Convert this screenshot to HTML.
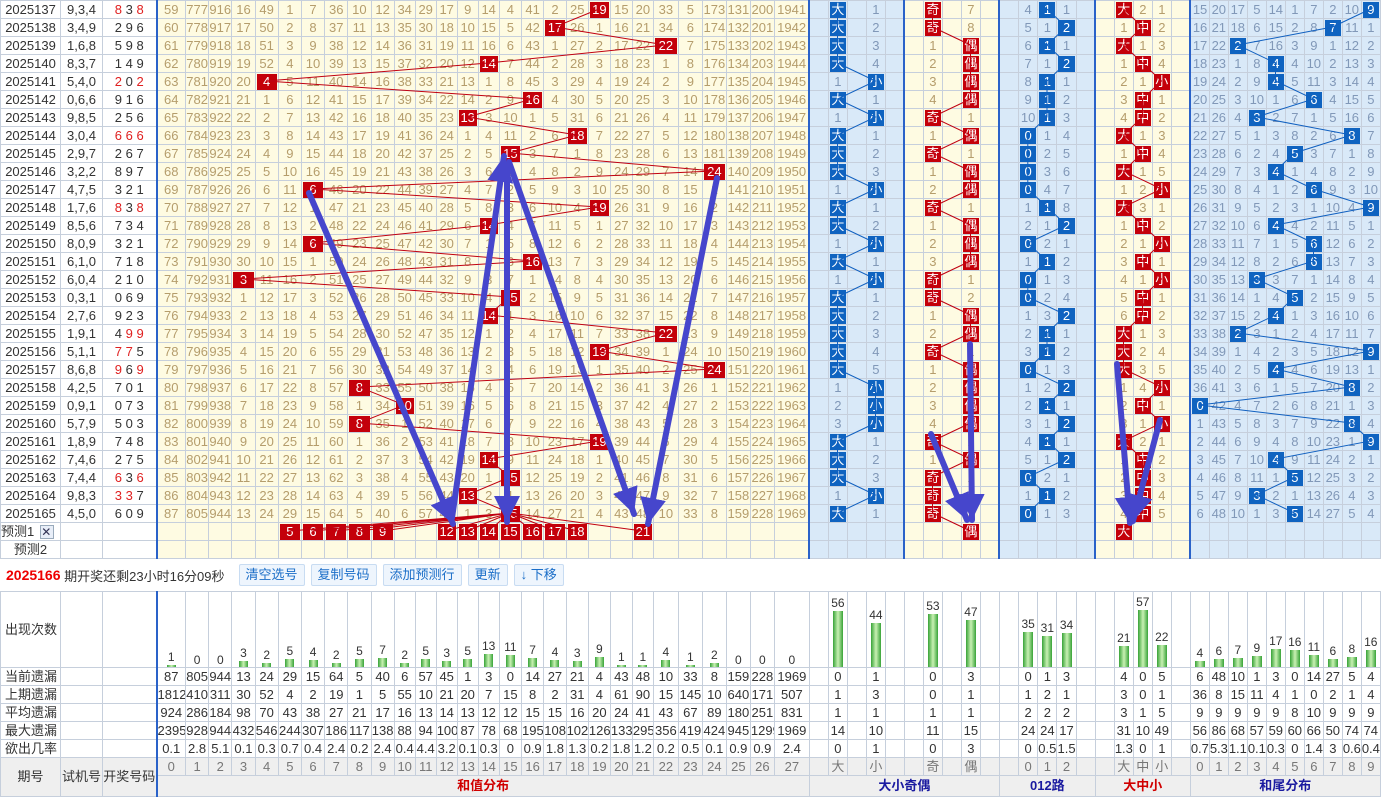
<!DOCTYPE html>
<html><head><meta charset="utf-8"><style>
*{margin:0;padding:0;box-sizing:border-box}
body{width:1382px;height:800px;background:#fff;font-family:"Liberation Sans","Noto Sans CJK SC",sans-serif;font-size:13px;color:#333;position:relative;overflow:hidden}
table{border-collapse:collapse;table-layout:fixed;width:1380px}
td{border:1px solid #c6cfdc;padding:0;text-align:center;white-space:nowrap;overflow:hidden;line-height:16px}
.m tr{height:18px}
col.y{background:#fefbe2}col.b{background:#d9e9f8}
col.s{border-left:2px solid #2a62c9}
.m td:nth-child(n+4){color:#b59d6c}
.m td:nth-child(n+32):nth-child(-n+36),.m td:nth-child(n+42):nth-child(-n+46),.m td:nth-child(n+52){color:#8198b8}
b{display:block;margin:0 1px;background:#c4000a;color:#fff!important;font-weight:normal;height:16px;line-height:16px}
b.u{background:#0f63c0}
em{color:#e02020;font-style:normal}
.x{display:inline-block;width:14px;height:14px;border:1px solid #9ab;line-height:12px;font-size:12px;color:#335;margin-left:6px;background:#e8eef8}
.bar{height:32px;display:flex;align-items:center;padding-left:6px;font-size:13px}
.bar .t{color:#e00;font-weight:bold;font-size:14px}
.btn{display:inline-block;border:1px solid #c8dcf2;background:#eef5fd;color:#1b6ec8;padding:0 6px;height:22px;line-height:20px;margin-left:6px;border-radius:2px}
.st tr{height:18px}
.st td{color:#333}
.c td{vertical-align:bottom;height:76px;font-size:12px;line-height:13px}
.c i{display:block;width:9px;margin:1px auto 0;background:linear-gradient(90deg,#38a338,#c9f1b3,#38a338)}
.hd td{background:#efefef;color:#777}
.tt td{background:#efefef;font-weight:bold;height:21px}
svg{position:absolute;left:0;top:0}
</style></head><body>
<table class="m">
<colgroup><col style="width:60px"><col style="width:42px"><col style="width:54px">
<col class="y s" style="width:29px"><col class="y" style="width:23.2px"><col class="y" style="width:23.2px"><col class="y" style="width:23.2px"><col class="y" style="width:23.2px"><col class="y" style="width:23.2px"><col class="y" style="width:23.2px"><col class="y" style="width:23.2px"><col class="y" style="width:23.2px"><col class="y" style="width:23.2px"><col class="y" style="width:21px"><col class="y" style="width:21px"><col class="y" style="width:21px"><col class="y" style="width:21px"><col class="y" style="width:21px"><col class="y" style="width:22.3px"><col class="y" style="width:22.3px"><col class="y" style="width:22.3px"><col class="y" style="width:22.3px"><col class="y" style="width:22px"><col class="y" style="width:22px"><col class="y" style="width:21px"><col class="y" style="width:25px"><col class="y" style="width:24px"><col class="y" style="width:24px"><col class="y" style="width:24px"><col class="y" style="width:24px"><col class="y" style="width:35px">
<col class="b s" style="width:19px"><col class="b" style="width:19px"><col class="b" style="width:19px"><col class="b" style="width:19px"><col class="b" style="width:19px">
<col class="y s" style="width:19px"><col class="y" style="width:19px"><col class="y" style="width:19px"><col class="y" style="width:19px"><col class="y" style="width:19px">
<col class="b s" style="width:19.2px"><col class="b" style="width:19.2px"><col class="b" style="width:19.2px"><col class="b" style="width:19.2px"><col class="b" style="width:19.2px">
<col class="y s" style="width:19px"><col class="y" style="width:19px"><col class="y" style="width:19px"><col class="y" style="width:19px"><col class="y" style="width:19px">
<col class="b s" style="width:19px"><col class="b" style="width:19px"><col class="b" style="width:19px"><col class="b" style="width:19px"><col class="b" style="width:19px"><col class="b" style="width:19px"><col class="b" style="width:19px"><col class="b" style="width:19px"><col class="b" style="width:19px"><col class="b" style="width:19px"></colgroup>
<tr><td>2025137<td>9,3,4<td><em>8</em> 3 <em>8</em><td>59<td>777<td>916<td>16<td>49<td>1<td>7<td>36<td>10<td>12<td>34<td>29<td>17<td>9<td>14<td>4<td>41<td>2<td>25<td><b>19</b><td>15<td>20<td>33<td>5<td>173<td>131<td>200<td>1941<td><td><b class=u>大</b><td><td>1<td><td><td><b>奇</b><td><td>7<td><td><td>4<td><b class=u>1</b><td>1<td><td><td><b>大</b><td>2<td>1<td><td>15<td>20<td>17<td>5<td>14<td>1<td>7<td>2<td>10<td><b class=u>9</b></tr>
<tr><td>2025138<td>3,4,9<td>2 9 6<td>60<td>778<td>917<td>17<td>50<td>2<td>8<td>37<td>11<td>13<td>35<td>30<td>18<td>10<td>15<td>5<td>42<td><b>17</b><td>26<td>1<td>16<td>21<td>34<td>6<td>174<td>132<td>201<td>1942<td><td><b class=u>大</b><td><td>2<td><td><td><b>奇</b><td><td>8<td><td><td>5<td>1<td><b class=u>2</b><td><td><td>1<td><b>中</b><td>2<td><td>16<td>21<td>18<td>6<td>15<td>2<td>8<td><b class=u>7</b><td>11<td>1</tr>
<tr><td>2025139<td>1,6,8<td>5 9 8<td>61<td>779<td>918<td>18<td>51<td>3<td>9<td>38<td>12<td>14<td>36<td>31<td>19<td>11<td>16<td>6<td>43<td>1<td>27<td>2<td>17<td>22<td><b>22</b><td>7<td>175<td>133<td>202<td>1943<td><td><b class=u>大</b><td><td>3<td><td><td>1<td><td><b>偶</b><td><td><td>6<td><b class=u>1</b><td>1<td><td><td><b>大</b><td>1<td>3<td><td>17<td>22<td><b class=u>2</b><td>7<td>16<td>3<td>9<td>1<td>12<td>2</tr>
<tr><td>2025140<td>8,3,7<td>1 4 9<td>62<td>780<td>919<td>19<td>52<td>4<td>10<td>39<td>13<td>15<td>37<td>32<td>20<td>12<td><b>14</b><td>7<td>44<td>2<td>28<td>3<td>18<td>23<td>1<td>8<td>176<td>134<td>203<td>1944<td><td><b class=u>大</b><td><td>4<td><td><td>2<td><td><b>偶</b><td><td><td>7<td>1<td><b class=u>2</b><td><td><td>1<td><b>中</b><td>4<td><td>18<td>23<td>1<td>8<td><b class=u>4</b><td>4<td>10<td>2<td>13<td>3</tr>
<tr><td>2025141<td>5,4,0<td><em>2</em> 0 <em>2</em><td>63<td>781<td>920<td>20<td><b>4</b><td>5<td>11<td>40<td>14<td>16<td>38<td>33<td>21<td>13<td>1<td>8<td>45<td>3<td>29<td>4<td>19<td>24<td>2<td>9<td>177<td>135<td>204<td>1945<td><td>1<td><td><b class=u>小</b><td><td><td>3<td><td><b>偶</b><td><td><td>8<td><b class=u>1</b><td>1<td><td><td>2<td>1<td><b>小</b><td><td>19<td>24<td>2<td>9<td><b class=u>4</b><td>5<td>11<td>3<td>14<td>4</tr>
<tr><td>2025142<td>0,6,6<td>9 1 6<td>64<td>782<td>921<td>21<td>1<td>6<td>12<td>41<td>15<td>17<td>39<td>34<td>22<td>14<td>2<td>9<td><b>16</b><td>4<td>30<td>5<td>20<td>25<td>3<td>10<td>178<td>136<td>205<td>1946<td><td><b class=u>大</b><td><td>1<td><td><td>4<td><td><b>偶</b><td><td><td>9<td><b class=u>1</b><td>2<td><td><td>3<td><b>中</b><td>1<td><td>20<td>25<td>3<td>10<td>1<td>6<td><b class=u>6</b><td>4<td>15<td>5</tr>
<tr><td>2025143<td>9,8,5<td>2 5 6<td>65<td>783<td>922<td>22<td>2<td>7<td>13<td>42<td>16<td>18<td>40<td>35<td>23<td><b>13</b><td>3<td>10<td>1<td>5<td>31<td>6<td>21<td>26<td>4<td>11<td>179<td>137<td>206<td>1947<td><td>1<td><td><b class=u>小</b><td><td><td><b>奇</b><td><td>1<td><td><td>10<td><b class=u>1</b><td>3<td><td><td>4<td><b>中</b><td>2<td><td>21<td>26<td>4<td><b class=u>3</b><td>2<td>7<td>1<td>5<td>16<td>6</tr>
<tr><td>2025144<td>3,0,4<td><em>6 6 6</em><td>66<td>784<td>923<td>23<td>3<td>8<td>14<td>43<td>17<td>19<td>41<td>36<td>24<td>1<td>4<td>11<td>2<td>6<td><b>18</b><td>7<td>22<td>27<td>5<td>12<td>180<td>138<td>207<td>1948<td><td><b class=u>大</b><td><td>1<td><td><td>1<td><td><b>偶</b><td><td><td><b class=u>0</b><td>1<td>4<td><td><td><b>大</b><td>1<td>3<td><td>22<td>27<td>5<td>1<td>3<td>8<td>2<td>6<td><b class=u>8</b><td>7</tr>
<tr><td>2025145<td>2,9,7<td>2 6 7<td>67<td>785<td>924<td>24<td>4<td>9<td>15<td>44<td>18<td>20<td>42<td>37<td>25<td>2<td>5<td><b>15</b><td>3<td>7<td>1<td>8<td>23<td>28<td>6<td>13<td>181<td>139<td>208<td>1949<td><td><b class=u>大</b><td><td>2<td><td><td><b>奇</b><td><td>1<td><td><td><b class=u>0</b><td>2<td>5<td><td><td>1<td><b>中</b><td>4<td><td>23<td>28<td>6<td>2<td>4<td><b class=u>5</b><td>3<td>7<td>1<td>8</tr>
<tr><td>2025146<td>3,2,2<td>8 9 7<td>68<td>786<td>925<td>25<td>5<td>10<td>16<td>45<td>19<td>21<td>43<td>38<td>26<td>3<td>6<td>1<td>4<td>8<td>2<td>9<td>24<td>29<td>7<td>14<td><b>24</b><td>140<td>209<td>1950<td><td><b class=u>大</b><td><td>3<td><td><td>1<td><td><b>偶</b><td><td><td><b class=u>0</b><td>3<td>6<td><td><td><b>大</b><td>1<td>5<td><td>24<td>29<td>7<td>3<td><b class=u>4</b><td>1<td>4<td>8<td>2<td>9</tr>
<tr><td>2025147<td>4,7,5<td>3 2 1<td>69<td>787<td>926<td>26<td>6<td>11<td><b>6</b><td>46<td>20<td>22<td>44<td>39<td>27<td>4<td>7<td>2<td>5<td>9<td>3<td>10<td>25<td>30<td>8<td>15<td>1<td>141<td>210<td>1951<td><td>1<td><td><b class=u>小</b><td><td><td>2<td><td><b>偶</b><td><td><td><b class=u>0</b><td>4<td>7<td><td><td>1<td>2<td><b>小</b><td><td>25<td>30<td>8<td>4<td>1<td>2<td><b class=u>6</b><td>9<td>3<td>10</tr>
<tr><td>2025148<td>1,7,6<td><em>8</em> 3 <em>8</em><td>70<td>788<td>927<td>27<td>7<td>12<td>1<td>47<td>21<td>23<td>45<td>40<td>28<td>5<td>8<td>3<td>6<td>10<td>4<td><b>19</b><td>26<td>31<td>9<td>16<td>2<td>142<td>211<td>1952<td><td><b class=u>大</b><td><td>1<td><td><td><b>奇</b><td><td>1<td><td><td>1<td><b class=u>1</b><td>8<td><td><td><b>大</b><td>3<td>1<td><td>26<td>31<td>9<td>5<td>2<td>3<td>1<td>10<td>4<td><b class=u>9</b></tr>
<tr><td>2025149<td>8,5,6<td>7 3 4<td>71<td>789<td>928<td>28<td>8<td>13<td>2<td>48<td>22<td>24<td>46<td>41<td>29<td>6<td><b>14</b><td>4<td>7<td>11<td>5<td>1<td>27<td>32<td>10<td>17<td>3<td>143<td>212<td>1953<td><td><b class=u>大</b><td><td>2<td><td><td>1<td><td><b>偶</b><td><td><td>2<td>1<td><b class=u>2</b><td><td><td>1<td><b>中</b><td>2<td><td>27<td>32<td>10<td>6<td><b class=u>4</b><td>4<td>2<td>11<td>5<td>1</tr>
<tr><td>2025150<td>8,0,9<td>3 2 1<td>72<td>790<td>929<td>29<td>9<td>14<td><b>6</b><td>49<td>23<td>25<td>47<td>42<td>30<td>7<td>1<td>5<td>8<td>12<td>6<td>2<td>28<td>33<td>11<td>18<td>4<td>144<td>213<td>1954<td><td>1<td><td><b class=u>小</b><td><td><td>2<td><td><b>偶</b><td><td><td><b class=u>0</b><td>2<td>1<td><td><td>2<td>1<td><b>小</b><td><td>28<td>33<td>11<td>7<td>1<td>5<td><b class=u>6</b><td>12<td>6<td>2</tr>
<tr><td>2025151<td>6,1,0<td>7 1 8<td>73<td>791<td>930<td>30<td>10<td>15<td>1<td>50<td>24<td>26<td>48<td>43<td>31<td>8<td>2<td>6<td><b>16</b><td>13<td>7<td>3<td>29<td>34<td>12<td>19<td>5<td>145<td>214<td>1955<td><td><b class=u>大</b><td><td>1<td><td><td>3<td><td><b>偶</b><td><td><td>1<td><b class=u>1</b><td>2<td><td><td>3<td><b>中</b><td>1<td><td>29<td>34<td>12<td>8<td>2<td>6<td><b class=u>6</b><td>13<td>7<td>3</tr>
<tr><td>2025152<td>6,0,4<td>2 1 0<td>74<td>792<td>931<td><b>3</b><td>11<td>16<td>2<td>51<td>25<td>27<td>49<td>44<td>32<td>9<td>3<td>7<td>1<td>14<td>8<td>4<td>30<td>35<td>13<td>20<td>6<td>146<td>215<td>1956<td><td>1<td><td><b class=u>小</b><td><td><td><b>奇</b><td><td>1<td><td><td><b class=u>0</b><td>1<td>3<td><td><td>4<td>1<td><b>小</b><td><td>30<td>35<td>13<td><b class=u>3</b><td>3<td>7<td>1<td>14<td>8<td>4</tr>
<tr><td>2025153<td>0,3,1<td>0 6 9<td>75<td>793<td>932<td>1<td>12<td>17<td>3<td>52<td>26<td>28<td>50<td>45<td>33<td>10<td>4<td><b>15</b><td>2<td>15<td>9<td>5<td>31<td>36<td>14<td>21<td>7<td>147<td>216<td>1957<td><td><b class=u>大</b><td><td>1<td><td><td><b>奇</b><td><td>2<td><td><td><b class=u>0</b><td>2<td>4<td><td><td>5<td><b>中</b><td>1<td><td>31<td>36<td>14<td>1<td>4<td><b class=u>5</b><td>2<td>15<td>9<td>5</tr>
<tr><td>2025154<td>2,7,6<td>9 2 3<td>76<td>794<td>933<td>2<td>13<td>18<td>4<td>53<td>27<td>29<td>51<td>46<td>34<td>11<td><b>14</b><td>1<td>3<td>16<td>10<td>6<td>32<td>37<td>15<td>22<td>8<td>148<td>217<td>1958<td><td><b class=u>大</b><td><td>2<td><td><td>1<td><td><b>偶</b><td><td><td>1<td>3<td><b class=u>2</b><td><td><td>6<td><b>中</b><td>2<td><td>32<td>37<td>15<td>2<td><b class=u>4</b><td>1<td>3<td>16<td>10<td>6</tr>
<tr><td>2025155<td>1,9,1<td>4 <em>9 9</em><td>77<td>795<td>934<td>3<td>14<td>19<td>5<td>54<td>28<td>30<td>52<td>47<td>35<td>12<td>1<td>2<td>4<td>17<td>11<td>7<td>33<td>38<td><b>22</b><td>23<td>9<td>149<td>218<td>1959<td><td><b class=u>大</b><td><td>3<td><td><td>2<td><td><b>偶</b><td><td><td>2<td><b class=u>1</b><td>1<td><td><td><b>大</b><td>1<td>3<td><td>33<td>38<td><b class=u>2</b><td>3<td>1<td>2<td>4<td>17<td>11<td>7</tr>
<tr><td>2025156<td>5,1,1<td><em>7 7</em> 5<td>78<td>796<td>935<td>4<td>15<td>20<td>6<td>55<td>29<td>31<td>53<td>48<td>36<td>13<td>2<td>3<td>5<td>18<td>12<td><b>19</b><td>34<td>39<td>1<td>24<td>10<td>150<td>219<td>1960<td><td><b class=u>大</b><td><td>4<td><td><td><b>奇</b><td><td>1<td><td><td>3<td><b class=u>1</b><td>2<td><td><td><b>大</b><td>2<td>4<td><td>34<td>39<td>1<td>4<td>2<td>3<td>5<td>18<td>12<td><b class=u>9</b></tr>
<tr><td>2025157<td>8,6,8<td><em>9</em> 6 <em>9</em><td>79<td>797<td>936<td>5<td>16<td>21<td>7<td>56<td>30<td>32<td>54<td>49<td>37<td>14<td>3<td>4<td>6<td>19<td>13<td>1<td>35<td>40<td>2<td>25<td><b>24</b><td>151<td>220<td>1961<td><td><b class=u>大</b><td><td>5<td><td><td>1<td><td><b>偶</b><td><td><td><b class=u>0</b><td>1<td>3<td><td><td><b>大</b><td>3<td>5<td><td>35<td>40<td>2<td>5<td><b class=u>4</b><td>4<td>6<td>19<td>13<td>1</tr>
<tr><td>2025158<td>4,2,5<td>7 0 1<td>80<td>798<td>937<td>6<td>17<td>22<td>8<td>57<td><b>8</b><td>33<td>55<td>50<td>38<td>15<td>4<td>5<td>7<td>20<td>14<td>2<td>36<td>41<td>3<td>26<td>1<td>152<td>221<td>1962<td><td>1<td><td><b class=u>小</b><td><td><td>2<td><td><b>偶</b><td><td><td>1<td>2<td><b class=u>2</b><td><td><td>1<td>4<td><b>小</b><td><td>36<td>41<td>3<td>6<td>1<td>5<td>7<td>20<td><b class=u>8</b><td>2</tr>
<tr><td>2025159<td>0,9,1<td>0 7 3<td>81<td>799<td>938<td>7<td>18<td>23<td>9<td>58<td>1<td>34<td><b>10</b><td>51<td>39<td>16<td>5<td>6<td>8<td>21<td>15<td>3<td>37<td>42<td>4<td>27<td>2<td>153<td>222<td>1963<td><td>2<td><td><b class=u>小</b><td><td><td>3<td><td><b>偶</b><td><td><td>2<td><b class=u>1</b><td>1<td><td><td>2<td><b>中</b><td>1<td><td><b class=u>0</b><td>42<td>4<td>7<td>2<td>6<td>8<td>21<td>1<td>3</tr>
<tr><td>2025160<td>5,7,9<td>5 0 3<td>82<td>800<td>939<td>8<td>19<td>24<td>10<td>59<td><b>8</b><td>35<td>1<td>52<td>40<td>17<td>6<td>7<td>9<td>22<td>16<td>4<td>38<td>43<td>5<td>28<td>3<td>154<td>223<td>1964<td><td>3<td><td><b class=u>小</b><td><td><td>4<td><td><b>偶</b><td><td><td>3<td>1<td><b class=u>2</b><td><td><td>3<td>1<td><b>小</b><td><td>1<td>43<td>5<td>8<td>3<td>7<td>9<td>22<td><b class=u>8</b><td>4</tr>
<tr><td>2025161<td>1,8,9<td>7 4 8<td>83<td>801<td>940<td>9<td>20<td>25<td>11<td>60<td>1<td>36<td>2<td>53<td>41<td>18<td>7<td>8<td>10<td>23<td>17<td><b>19</b><td>39<td>44<td>6<td>29<td>4<td>155<td>224<td>1965<td><td><b class=u>大</b><td><td>1<td><td><td><b>奇</b><td><td>1<td><td><td>4<td><b class=u>1</b><td>1<td><td><td><b>大</b><td>2<td>1<td><td>2<td>44<td>6<td>9<td>4<td>8<td>10<td>23<td>1<td><b class=u>9</b></tr>
<tr><td>2025162<td>7,4,6<td>2 7 5<td>84<td>802<td>941<td>10<td>21<td>26<td>12<td>61<td>2<td>37<td>3<td>54<td>42<td>19<td><b>14</b><td>9<td>11<td>24<td>18<td>1<td>40<td>45<td>7<td>30<td>5<td>156<td>225<td>1966<td><td><b class=u>大</b><td><td>2<td><td><td>1<td><td><b>偶</b><td><td><td>5<td>1<td><b class=u>2</b><td><td><td>1<td><b>中</b><td>2<td><td>3<td>45<td>7<td>10<td><b class=u>4</b><td>9<td>11<td>24<td>2<td>1</tr>
<tr><td>2025163<td>7,4,4<td><em>6</em> 3 <em>6</em><td>85<td>803<td>942<td>11<td>22<td>27<td>13<td>62<td>3<td>38<td>4<td>55<td>43<td>20<td>1<td><b>15</b><td>12<td>25<td>19<td>2<td>41<td>46<td>8<td>31<td>6<td>157<td>226<td>1967<td><td><b class=u>大</b><td><td>3<td><td><td><b>奇</b><td><td>1<td><td><td><b class=u>0</b><td>2<td>1<td><td><td>2<td><b>中</b><td>3<td><td>4<td>46<td>8<td>11<td>1<td><b class=u>5</b><td>12<td>25<td>3<td>2</tr>
<tr><td>2025164<td>9,8,3<td><em>3 3</em> 7<td>86<td>804<td>943<td>12<td>23<td>28<td>14<td>63<td>4<td>39<td>5<td>56<td>44<td><b>13</b><td>2<td>1<td>13<td>26<td>20<td>3<td>42<td>47<td>9<td>32<td>7<td>158<td>227<td>1968<td><td>1<td><td><b class=u>小</b><td><td><td><b>奇</b><td><td>2<td><td><td>1<td><b class=u>1</b><td>2<td><td><td>3<td><b>中</b><td>4<td><td>5<td>47<td>9<td><b class=u>3</b><td>2<td>1<td>13<td>26<td>4<td>3</tr>
<tr><td>2025165<td>4,5,0<td>6 0 9<td>87<td>805<td>944<td>13<td>24<td>29<td>15<td>64<td>5<td>40<td>6<td>57<td>45<td>1<td>3<td><b>15</b><td>14<td>27<td>21<td>4<td>43<td>48<td>10<td>33<td>8<td>159<td>228<td>1969<td><td><b class=u>大</b><td><td>1<td><td><td><b>奇</b><td><td>3<td><td><td><b class=u>0</b><td>1<td>3<td><td><td>4<td><b>中</b><td>5<td><td>6<td>48<td>10<td>1<td>3<td><b class=u>5</b><td>14<td>27<td>5<td>4</tr>
<tr><td style="text-align:left;color:#333">预测1<span class="x">✕</span><td><td><td><td><td><td><td><td><b>5</b><td><b>6</b><td><b>7</b><td><b>8</b><td><b>9</b><td><td><td><b>12</b><td><b>13</b><td><b>14</b><td><b>15</b><td><b>16</b><td><b>17</b><td><b>18</b><td><td><td><b>21</b><td><td><td><td><td><td>
<td><td><td><td><td>
<td><td><td><td><b>偶</b><td>
<td><td><td><td><td>
<td><td><b>大</b><td><td><td>
<td><td><td><td><td><td><td><td><td><td></tr>
<tr><td style="color:#333">预测2<td><td><td><td><td><td><td><td><td><td><td><td><td><td><td><td><td><td><td><td><td><td><td><td><td><td><td><td><td><td><td><td><td><td><td><td><td><td><td><td><td><td><td><td><td><td><td><td><td><td><td><td><td><td><td><td><td><td><td><td></tr>
</table>
<div class="bar"><span class="t">2025166</span>&nbsp;期开奖还剩23小时16分09秒<span class="btn" style="margin-left:14px">清空选号</span><span class="btn">复制号码</span><span class="btn">添加预测行</span><span class="btn">更新</span><span class="btn">↓ 下移</span></div>
<table class="st">
<colgroup><col style="width:60px"><col style="width:42px"><col style="width:54px">
<col class="s" style="width:29px"><col style="width:23.2px"><col style="width:23.2px"><col style="width:23.2px"><col style="width:23.2px"><col style="width:23.2px"><col style="width:23.2px"><col style="width:23.2px"><col style="width:23.2px"><col style="width:23.2px"><col style="width:21px"><col style="width:21px"><col style="width:21px"><col style="width:21px"><col style="width:21px"><col style="width:22.3px"><col style="width:22.3px"><col style="width:22.3px"><col style="width:22.3px"><col style="width:22px"><col style="width:22px"><col style="width:21px"><col style="width:25px"><col style="width:24px"><col style="width:24px"><col style="width:24px"><col style="width:24px"><col style="width:35px">
<col style="width:19px"><col style="width:19px"><col style="width:19px"><col style="width:19px"><col style="width:19px"><col style="width:19px"><col style="width:19px"><col style="width:19px"><col style="width:19px"><col style="width:19px"><col style="width:19.2px"><col style="width:19.2px"><col style="width:19.2px"><col style="width:19.2px"><col style="width:19.2px"><col style="width:19px"><col style="width:19px"><col style="width:19px"><col style="width:19px"><col style="width:19px"><col style="width:19px"><col style="width:19px"><col style="width:19px"><col style="width:19px"><col style="width:19px"><col style="width:19px"><col style="width:19px"><col style="width:19px"><col style="width:19px"><col style="width:19px"></colgroup>
<tr class="c"><td style="vertical-align:middle;font-size:13px;text-align:left;padding-left:4px">出现次数<td><td><td>1<i style="height:2px"></i><td>0<td>0<td>3<i style="height:6px"></i><td>2<i style="height:4px"></i><td>5<i style="height:8px"></i><td>4<i style="height:7px"></i><td>2<i style="height:4px"></i><td>5<i style="height:8px"></i><td>7<i style="height:9px"></i><td>2<i style="height:4px"></i><td>5<i style="height:8px"></i><td>3<i style="height:6px"></i><td>5<i style="height:8px"></i><td>13<i style="height:13px"></i><td>11<i style="height:12px"></i><td>7<i style="height:9px"></i><td>4<i style="height:7px"></i><td>3<i style="height:6px"></i><td>9<i style="height:10px"></i><td>1<i style="height:2px"></i><td>1<i style="height:2px"></i><td>4<i style="height:7px"></i><td>1<i style="height:2px"></i><td>2<i style="height:4px"></i><td>0<td>0<td>0<td><td>56<i style="height:56px;width:10px"></i><td><td>44<i style="height:44px;width:10px"></i><td><td><td>53<i style="height:53px;width:10px"></i><td><td>47<i style="height:47px;width:10px"></i><td><td><td>35<i style="height:35px;width:10px"></i><td>31<i style="height:31px;width:10px"></i><td>34<i style="height:34px;width:10px"></i><td><td><td>21<i style="height:21px;width:10px"></i><td>57<i style="height:57px;width:10px"></i><td>22<i style="height:22px;width:10px"></i><td><td>4<i style="height:6px;width:10px"></i><td>6<i style="height:8px;width:10px"></i><td>7<i style="height:9px;width:10px"></i><td>9<i style="height:11px;width:10px"></i><td>17<i style="height:18px;width:10px"></i><td>16<i style="height:17px;width:10px"></i><td>11<i style="height:12px;width:10px"></i><td>6<i style="height:8px;width:10px"></i><td>8<i style="height:10px;width:10px"></i><td>16<i style="height:17px;width:10px"></i></tr>
<tr><td style="text-align:left;padding-left:4px">当前遗漏<td><td><td>87<td>805<td>944<td>13<td>24<td>29<td>15<td>64<td>5<td>40<td>6<td>57<td>45<td>1<td>3<td>0<td>14<td>27<td>21<td>4<td>43<td>48<td>10<td>33<td>8<td>159<td>228<td>1969<td><td>0<td><td>1<td><td><td>0<td><td>3<td><td><td>0<td>1<td>3<td><td><td>4<td>0<td>5<td><td>6<td>48<td>10<td>1<td>3<td>0<td>14<td>27<td>5<td>4</tr>
<tr><td style="text-align:left;padding-left:4px">上期遗漏<td><td><td>1812<td>410<td>311<td>30<td>52<td>4<td>2<td>19<td>1<td>5<td>55<td>10<td>21<td>20<td>7<td>15<td>8<td>2<td>31<td>4<td>61<td>90<td>15<td>145<td>10<td>640<td>171<td>507<td><td>1<td><td>3<td><td><td>0<td><td>1<td><td><td>1<td>2<td>1<td><td><td>3<td>0<td>1<td><td>36<td>8<td>15<td>11<td>4<td>1<td>0<td>2<td>1<td>4</tr>
<tr><td style="text-align:left;padding-left:4px">平均遗漏<td><td><td>924<td>286<td>184<td>98<td>70<td>43<td>38<td>27<td>21<td>17<td>16<td>13<td>14<td>13<td>12<td>12<td>15<td>15<td>16<td>20<td>24<td>41<td>43<td>67<td>89<td>180<td>251<td>831<td><td>1<td><td>1<td><td><td>1<td><td>1<td><td><td>2<td>2<td>2<td><td><td>3<td>1<td>5<td><td>9<td>9<td>9<td>9<td>9<td>8<td>10<td>9<td>9<td>9</tr>
<tr><td style="text-align:left;padding-left:4px">最大遗漏<td><td><td>2395<td>928<td>944<td>432<td>546<td>244<td>307<td>186<td>117<td>138<td>88<td>94<td>100<td>87<td>78<td>68<td>195<td>108<td>102<td>126<td>133<td>295<td>356<td>419<td>424<td>945<td>1299<td>1969<td><td>14<td><td>10<td><td><td>11<td><td>15<td><td><td>24<td>24<td>17<td><td><td>31<td>10<td>49<td><td>56<td>86<td>68<td>57<td>59<td>60<td>66<td>50<td>74<td>74</tr>
<tr><td style="text-align:left;padding-left:4px">欲出几率<td><td><td>0.1<td>2.8<td>5.1<td>0.1<td>0.3<td>0.7<td>0.4<td>2.4<td>0.2<td>2.4<td>0.4<td>4.4<td>3.2<td>0.1<td>0.3<td>0<td>0.9<td>1.8<td>1.3<td>0.2<td>1.8<td>1.2<td>0.2<td>0.5<td>0.1<td>0.9<td>0.9<td>2.4<td><td>0<td><td>1<td><td><td>0<td><td>3<td><td><td>0<td>0.5<td>1.5<td><td><td>1.3<td>0<td>1<td><td>0.7<td>5.3<td>1.1<td>0.1<td>0.3<td>0<td>1.4<td>3<td>0.6<td>0.4</tr>
<tr class="hd"><td rowspan="2" style="color:#333">期号<td rowspan="2" style="color:#333">试机号<td rowspan="2" style="color:#333">开奖号码<td>0<td>1<td>2<td>3<td>4<td>5<td>6<td>7<td>8<td>9<td>10<td>11<td>12<td>13<td>14<td>15<td>16<td>17<td>18<td>19<td>20<td>21<td>22<td>23<td>24<td>25<td>26<td>27<td><td>大<td><td>小<td><td><td>奇<td><td>偶<td><td><td>0<td>1<td>2<td><td><td>大<td>中<td>小<td><td>0<td>1<td>2<td>3<td>4<td>5<td>6<td>7<td>8<td>9</tr>
<tr class="tt"><td colspan="28" style="color:#d00000">和值分布<td colspan="10" style="color:#1a1aa0">大小奇偶<td colspan="5" style="color:#1a1aa0">012路<td colspan="5" style="color:#d00000">大中小<td colspan="10" style="color:#1a1aa0">和尾分布</tr>
</table>
<svg width="1382" height="560" viewBox="0 0 1382 560">
<defs><marker id="ah" markerUnits="userSpaceOnUse" markerWidth="26" markerHeight="32" refX="26" refY="13" orient="auto"><path d="M0,0 L26,13 L0,26 Z" fill="#4646cc"/></marker></defs>
<g fill="none" stroke="#c00010" stroke-width="1">
<polyline points="599,9 554.6,27 665.5,45 488.3,63 266.2,81 532.3,99 467.3,117 576.9,135 510,153 714,171 312.6,189 599,207 488.3,225 312.6,243 532.3,261 243,279 510,297 488.3,315 665.5,333 599,351 714,369 359,387 404.3,405 359,423 599,441 488.3,459 510,477 467.3,495 510,513"/>
<path d="M510,513L289.4,531M510,513L312.6,531M510,513L335.8,531M510,513L359,531M510,513L382.2,531M510,513L446.3,531M510,513L467.3,531M510,513L488.3,531M510,513L532.3,531M510,513L554.6,531M510,513L576.9,531M510,513L642.5,531"/>
<polyline points="932.5,9 932.5,27 970.5,45 970.5,63 970.5,81 970.5,99 932.5,117 970.5,135 932.5,153 970.5,171 970.5,189 932.5,207 970.5,225 970.5,243 970.5,261 932.5,279 932.5,297 970.5,315 970.5,333 932.5,351 970.5,369 970.5,387 970.5,405 970.5,423 932.5,441 970.5,459 932.5,477 932.5,495 932.5,513 970.5,531"/>
<polyline points="1123.5,9 1142.5,27 1123.5,45 1142.5,63 1161.5,81 1142.5,99 1142.5,117 1123.5,135 1142.5,153 1123.5,171 1161.5,189 1123.5,207 1142.5,225 1161.5,243 1142.5,261 1161.5,279 1142.5,297 1142.5,315 1123.5,333 1123.5,351 1123.5,369 1161.5,387 1142.5,405 1161.5,423 1123.5,441 1142.5,459 1142.5,477 1142.5,495 1142.5,513 1123.5,531"/>
</g>
<g fill="none" stroke="#1060c0" stroke-width="1">
<polyline points="837.5,9 837.5,27 837.5,45 837.5,63 875.5,81 837.5,99 875.5,117 837.5,135 837.5,153 837.5,171 875.5,189 837.5,207 837.5,225 875.5,243 837.5,261 875.5,279 837.5,297 837.5,315 837.5,333 837.5,351 837.5,369 875.5,387 875.5,405 875.5,423 837.5,441 837.5,459 837.5,477 875.5,495 837.5,513"/>
<polyline points="1047,9 1066.2,27 1047,45 1066.2,63 1047,81 1047,99 1047,117 1027.8,135 1027.8,153 1027.8,171 1027.8,189 1047,207 1066.2,225 1027.8,243 1047,261 1027.8,279 1027.8,297 1066.2,315 1047,333 1047,351 1027.8,369 1066.2,387 1047,405 1066.2,423 1047,441 1066.2,459 1027.8,477 1047,495 1027.8,513"/>
<polyline points="1370.5,9 1332.5,27 1237.5,45 1275.5,63 1275.5,81 1313.5,99 1256.5,117 1351.5,135 1294.5,153 1275.5,171 1313.5,189 1370.5,207 1275.5,225 1313.5,243 1313.5,261 1256.5,279 1294.5,297 1275.5,315 1237.5,333 1370.5,351 1275.5,369 1351.5,387 1199.5,405 1351.5,423 1370.5,441 1275.5,459 1294.5,477 1256.5,495 1294.5,513"/>
</g>
<g stroke="#4646cc" stroke-width="6" stroke-linecap="round" marker-end="url(#ah)">
<line x1="309" y1="193" x2="453" y2="524"/>
<line x1="452" y1="518" x2="504" y2="156"/>
<line x1="507" y1="165" x2="507" y2="522"/>
<line x1="509" y1="162" x2="634" y2="514"/>
<line x1="717" y1="178" x2="648" y2="524"/>
<line x1="970" y1="344" x2="972" y2="520"/>
<line x1="931" y1="434" x2="967" y2="520"/>
<line x1="1117" y1="364" x2="1130" y2="523"/>
<line x1="1160" y1="420" x2="1133" y2="521"/>
</g>
</svg>
</body></html>
